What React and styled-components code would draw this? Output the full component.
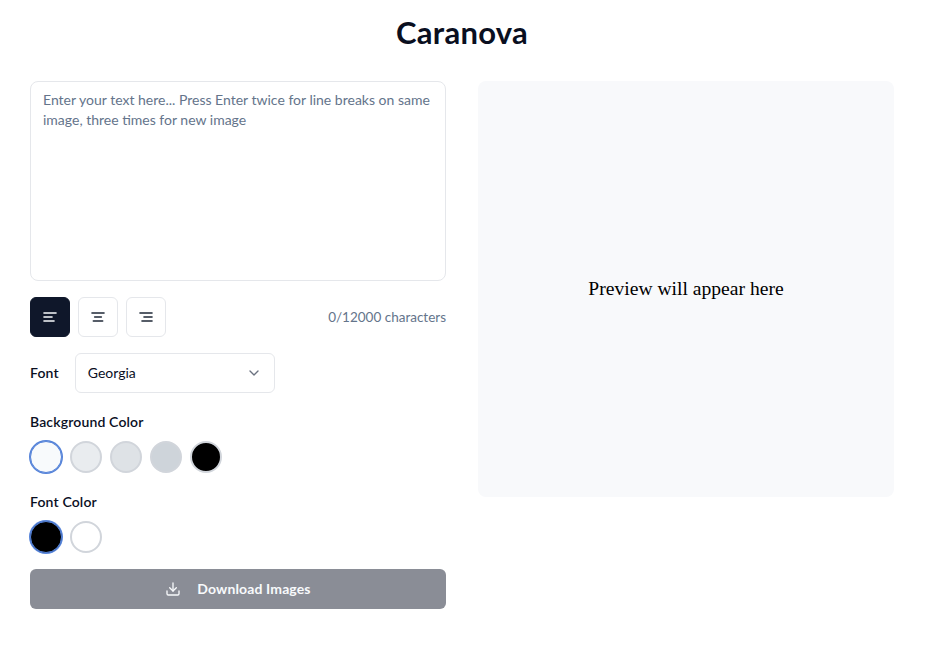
import React from 'react';
import styled, { createGlobalStyle } from 'styled-components';
import { ChevronDown, Download } from 'lucide-react';

const GlobalStyle = createGlobalStyle`
  html, body {
    margin: 0;
    padding: 0;
    background: #fff;
    font-family: Lato, "Noto Sans", sans-serif;
    color: #0f172a;
  }
  * { box-sizing: border-box; }
`;

const Page = styled.div`
  width: 934px;
  height: 655px;
  padding: 12px 40px 0 30px;
  overflow: hidden;
`;

const Title = styled.h1`
  margin: 0 0 29px;
  font-size: 31px;
  line-height: 40px;
  font-weight: 700;
  letter-spacing: 0.25px;
  text-align: center;
  color: #0a0f1f;
`;

const Columns = styled.div`
  display: grid;
  grid-template-columns: 416px 416px;
  gap: 32px;
  align-items: start;
`;

const Controls = styled.div`
  display: flex;
  flex-direction: column;
`;

const TextBox = styled.textarea`
  display: block;
  width: 100%;
  height: 200px;
  padding: 8px 12px;
  border: 1px solid #e5e7eb;
  border-radius: 8px;
  outline: none;
  resize: none;
  font-family: inherit;
  font-size: 14px;
  line-height: 20px;
  color: #0f172a;
  &::placeholder { color: #64748b; opacity: 1; }
`;

const AlignRow = styled.div`
  display: flex;
  align-items: center;
  gap: 8px;
  margin-top: 16px;
`;

const AlignButton = styled.button`
  width: 40px;
  height: 40px;
  display: flex;
  align-items: center;
  justify-content: center;
  padding: 0;
  border-radius: 6px;
  border: 1px solid ${({ $active }) => ($active ? '#0f172a' : '#e5e7eb')};
  background: ${({ $active }) => ($active ? '#0f172a' : '#fff')};
  color: ${({ $active }) => ($active ? '#f8fafc' : '#1f2937')};
`;

const CharCount = styled.span`
  margin-left: auto;
  font-size: 13.5px;
  color: #64748b;
`;

const FontRow = styled.div`
  display: flex;
  align-items: center;
  gap: 16px;
  margin-top: 16px;
`;

const Label = styled.span`
  font-size: 14px;
  line-height: 20px;
  font-weight: 600;
  letter-spacing: 0.15px;
  color: #0a0f1f;
`;

const FontSelect = styled.div`
  width: 200px;
  height: 40px;
  display: flex;
  align-items: center;
  justify-content: space-between;
  padding: 0 12px 1px;
  border: 1px solid #e5e7eb;
  border-radius: 6px;
  font-size: 14px;
  color: #0a0f1f;
  svg { color: #6b7280; }
`;

const ColorGroup = styled.div`
  margin-top: 19px;
  display: flex;
  flex-direction: column;
  gap: 9px;
`;

const Swatches = styled.div`
  display: flex;
  gap: 8px;
`;

const Swatch = styled.button`
  width: 32px;
  height: 32px;
  padding: 0;
  border-radius: 50%;
  background: ${({ $color }) => $color};
  border: ${({ $selected }) => ($selected ? '1px solid #5583d9' : '2px solid #d1d5db')};
  box-shadow: ${({ $selected }) => ($selected ? '0 0 0 1px #5583d9' : 'none')};
`;

const DownloadButton = styled.button`
  margin-top: 16px;
  width: 100%;
  height: 40px;
  display: flex;
  align-items: center;
  justify-content: center;
  gap: 16px;
  padding: 0 0 1px;
  border: none;
  border-radius: 6px;
  background: #8a8d96;
  color: #f8fafc;
  font-family: inherit;
  font-size: 14px;
  font-weight: 700;
  letter-spacing: 0.13px;
`;

const Preview = styled.div`
  height: 416px;
  display: flex;
  align-items: center;
  justify-content: center;
  border-radius: 8px;
  background: #f8f9fb;
  font-family: "Liberation Serif", serif;
  font-size: 19.6px;
  color: #000;
`;

const bgColors = ['#f8fafc', '#e9ecef', '#dee2e6', '#ced4da', '#000000'];
const fontColors = ['#000000', '#ffffff'];

const AlignIcon = ({ lines }) => (
  <svg width="16" height="16" viewBox="0 0 24 24" fill="none" stroke="currentColor" strokeWidth="2.4" strokeLinecap="round">
    {lines.map((d) => <path key={d} d={d} />)}
  </svg>
);

const App = () => {
  return (
    <Page>
      <GlobalStyle />
      <Title>Caranova</Title>
      <Columns>
        <Controls>
          <TextBox placeholder="Enter your text here... Press Enter twice for line breaks on same image, three times for new image" />
          <AlignRow>
            <AlignButton $active><AlignIcon lines={['M3 6h18', 'M3 12h12', 'M3 18h15']} /></AlignButton>
            <AlignButton><AlignIcon lines={['M3 6h18', 'M7 12h10', 'M5 18h14']} /></AlignButton>
            <AlignButton><AlignIcon lines={['M3 6h18', 'M9 12h12', 'M6 18h15']} /></AlignButton>
            <CharCount>0/12000 characters</CharCount>
          </AlignRow>
          <FontRow>
            <Label>Font</Label>
            <FontSelect>
              Georgia
              <ChevronDown size={16} />
            </FontSelect>
          </FontRow>
          <ColorGroup>
            <Label>Background Color</Label>
            <Swatches>
              {bgColors.map((c, i) => <Swatch key={c} $color={c} $selected={i === 0} />)}
            </Swatches>
          </ColorGroup>
          <ColorGroup>
            <Label>Font Color</Label>
            <Swatches>
              {fontColors.map((c, i) => <Swatch key={c} $color={c} $selected={i === 0} />)}
            </Swatches>
          </ColorGroup>
          <DownloadButton>
            <Download size={16} />
            Download Images
          </DownloadButton>
        </Controls>
        <Preview>Preview will appear here</Preview>
      </Columns>
    </Page>
  );
};

export default App;
